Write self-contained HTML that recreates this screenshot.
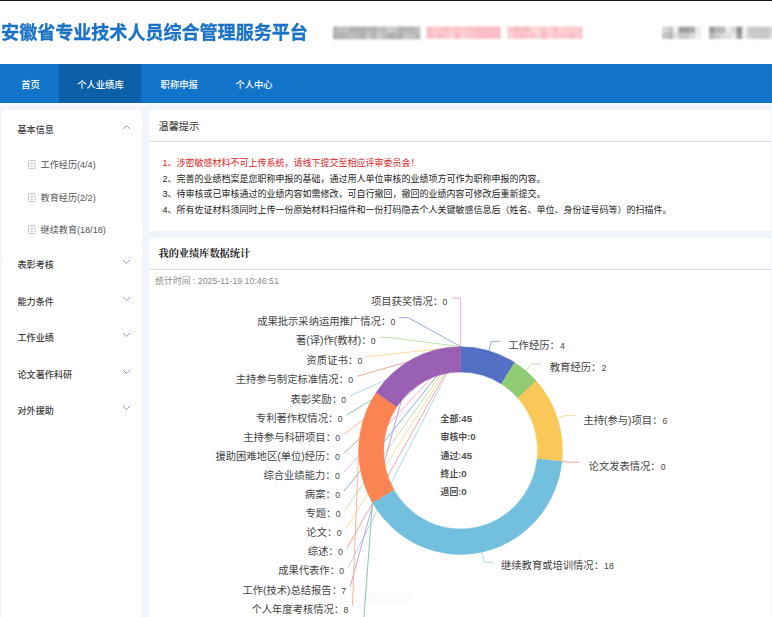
<!DOCTYPE html>
<html lang="zh-CN"><head><meta charset="utf-8"><title>安徽省专业技术人员综合管理服务平台</title>
<style>
html,body{margin:0;padding:0}
body{width:772px;height:617px;overflow:hidden;position:relative;background:#f1f4fa;font-family:"Liberation Sans","Noto Sans CJK SC",sans-serif;color:#333}
.abs,.mi,.si,.tip,.chev,.chart,.nav a{position:absolute}
#topline{left:0;top:0;width:772px;height:1.3px;background:#101010}
#head{left:0;top:0;width:772px;height:64px;background:#fff}
#title{left:1.1px;top:19px;font-size:18.1px;-webkit-text-stroke:0.3px #1b73c6;line-height:28px;font-weight:700;color:#1b73c6;white-space:nowrap;letter-spacing:-0.05px;transform:scaleY(1.03);transform-origin:0 6px}
#nav{left:0;top:64px;width:772px;height:39px;background:#1274c9}
#nav .act{position:absolute;left:58.5px;top:0;width:82.7px;height:39px;background:#0c5fa8}
.nav a{top:65.6px;height:39px;line-height:39px;font-size:9.3px;color:#fff;font-weight:500;white-space:nowrap;text-decoration:none}
#side{left:2px;top:110px;width:140px;height:520px;background:#fff;border-radius:3px}
.panel{left:149px;width:621.5px;background:#fff;border-radius:3px}
.ph{position:absolute;left:0;right:0;top:0;height:31px;border-bottom:1px solid #dcdcdc}
.mi{left:17.5px;font-size:9.1px;line-height:16px;color:#404040;font-weight:500;white-space:nowrap}
.si{left:40.6px;font-size:9.1px;line-height:16px;color:#555;white-space:nowrap}
.tip{left:162.5px;font-size:9.0px;line-height:16px;color:#222;white-space:nowrap}
.tip.red{color:#d9251c}
.h1{left:158.5px;font-size:10.2px;line-height:16px;color:#333;white-space:nowrap}
.chart{left:0;top:0}
.chart text{font-family:"Liberation Sans","Noto Sans CJK SC",sans-serif;fill:#444}
.chart .n{font-size:10.3px}
.chart .v{font-size:8.7px}
.chart .c{font-size:8.9px;font-weight:700;fill:#505050}
.chart .cd{font-size:9.7px}
</style></head><body>
<div class="abs" id="head"></div>
<div class="abs" id="topline"></div>
<div class="abs" id="title">安徽省专业技术人员综合管理服务平台</div>
<svg class="chart" style="filter:blur(0.9px)" width="772" height="64" viewBox="0 0 772 64"><rect x="333.0" y="26.5" width="5.7" height="6.5" fill="rgb(182, 182, 182)"/><rect x="333.0" y="32.8" width="5.7" height="6.5" fill="rgb(176, 176, 176)"/><rect x="338.4" y="26.5" width="5.7" height="6.5" fill="rgb(192, 192, 192)"/><rect x="338.4" y="32.8" width="5.7" height="6.5" fill="rgb(174, 174, 174)"/><rect x="343.9" y="26.5" width="5.7" height="6.5" fill="rgb(189, 189, 189)"/><rect x="343.9" y="32.8" width="5.7" height="6.5" fill="rgb(183, 183, 183)"/><rect x="349.3" y="26.5" width="5.7" height="6.5" fill="rgb(173, 173, 173)"/><rect x="349.3" y="32.8" width="5.7" height="6.5" fill="rgb(188, 188, 188)"/><rect x="354.8" y="26.5" width="5.7" height="6.5" fill="rgb(173, 173, 173)"/><rect x="354.8" y="32.8" width="5.7" height="6.5" fill="rgb(185, 185, 185)"/><rect x="360.2" y="26.5" width="5.7" height="6.5" fill="rgb(174, 174, 174)"/><rect x="360.2" y="32.8" width="5.7" height="6.5" fill="rgb(174, 174, 174)"/><rect x="365.6" y="26.5" width="5.7" height="6.5" fill="rgb(185, 185, 185)"/><rect x="365.6" y="32.8" width="5.7" height="6.5" fill="rgb(198, 198, 198)"/><rect x="371.1" y="26.5" width="5.7" height="6.5" fill="rgb(175, 175, 175)"/><rect x="371.1" y="32.8" width="5.7" height="6.5" fill="rgb(179, 179, 179)"/><rect x="376.5" y="26.5" width="5.7" height="6.5" fill="rgb(192, 192, 192)"/><rect x="376.5" y="32.8" width="5.7" height="6.5" fill="rgb(202, 202, 202)"/><rect x="381.9" y="26.5" width="5.7" height="6.5" fill="rgb(190, 190, 190)"/><rect x="381.9" y="32.8" width="5.7" height="6.5" fill="rgb(184, 184, 184)"/><rect x="387.4" y="26.5" width="5.7" height="6.5" fill="rgb(203, 203, 203)"/><rect x="387.4" y="32.8" width="5.7" height="6.5" fill="rgb(173, 173, 173)"/><rect x="392.8" y="26.5" width="5.7" height="6.5" fill="rgb(199, 199, 199)"/><rect x="392.8" y="32.8" width="5.7" height="6.5" fill="rgb(181, 181, 181)"/><rect x="398.2" y="26.5" width="5.7" height="6.5" fill="rgb(176, 176, 176)"/><rect x="398.2" y="32.8" width="5.7" height="6.5" fill="rgb(175, 175, 175)"/><rect x="403.7" y="26.5" width="5.7" height="6.5" fill="rgb(181, 181, 181)"/><rect x="403.7" y="32.8" width="5.7" height="6.5" fill="rgb(198, 198, 198)"/><rect x="409.1" y="26.5" width="5.7" height="6.5" fill="rgb(177, 177, 177)"/><rect x="409.1" y="32.8" width="5.7" height="6.5" fill="rgb(190, 190, 190)"/><rect x="414.6" y="26.5" width="5.7" height="6.5" fill="rgb(192, 192, 192)"/><rect x="414.6" y="32.8" width="5.7" height="6.5" fill="rgb(183, 183, 183)"/><rect x="426.5" y="26.5" width="6.0" height="6.3" fill="rgb(249, 188, 194)"/><rect x="426.5" y="32.5" width="6.0" height="6.3" fill="rgb(249, 188, 194)"/><rect x="432.2" y="26.5" width="6.0" height="6.3" fill="rgb(249, 188, 194)"/><rect x="432.2" y="32.5" width="6.0" height="6.3" fill="rgb(249, 188, 194)"/><rect x="437.9" y="26.5" width="6.0" height="6.3" fill="rgb(249, 188, 194)"/><rect x="437.9" y="32.5" width="6.0" height="6.3" fill="rgb(249, 188, 194)"/><rect x="443.6" y="26.5" width="6.0" height="6.3" fill="rgb(249, 188, 194)"/><rect x="443.6" y="32.5" width="6.0" height="6.3" fill="rgb(249, 188, 194)"/><rect x="449.3" y="26.5" width="6.0" height="6.3" fill="rgb(249, 188, 194)"/><rect x="449.3" y="32.5" width="6.0" height="6.3" fill="rgb(249, 188, 194)"/><rect x="455.0" y="26.5" width="6.0" height="6.3" fill="rgb(249, 188, 194)"/><rect x="455.0" y="32.5" width="6.0" height="6.3" fill="rgb(249, 188, 194)"/><rect x="460.7" y="26.5" width="6.0" height="6.3" fill="rgb(249, 188, 194)"/><rect x="460.7" y="32.5" width="6.0" height="6.3" fill="rgb(249, 188, 194)"/><rect x="466.3" y="26.5" width="6.0" height="6.3" fill="rgb(249, 188, 194)"/><rect x="466.3" y="32.5" width="6.0" height="6.3" fill="rgb(249, 188, 194)"/><rect x="472.0" y="26.5" width="6.0" height="6.3" fill="rgb(249, 188, 194)"/><rect x="472.0" y="32.5" width="6.0" height="6.3" fill="rgb(249, 188, 194)"/><rect x="477.7" y="26.5" width="6.0" height="6.3" fill="rgb(249, 188, 194)"/><rect x="477.7" y="32.5" width="6.0" height="6.3" fill="rgb(249, 188, 194)"/><rect x="483.4" y="26.5" width="6.0" height="6.3" fill="rgb(249, 188, 194)"/><rect x="483.4" y="32.5" width="6.0" height="6.3" fill="rgb(249, 188, 194)"/><rect x="489.1" y="26.5" width="6.0" height="6.3" fill="rgb(249, 188, 194)"/><rect x="489.1" y="32.5" width="6.0" height="6.3" fill="rgb(249, 188, 194)"/><rect x="494.8" y="26.5" width="6.0" height="6.3" fill="rgb(249, 188, 194)"/><rect x="494.8" y="32.5" width="6.0" height="6.3" fill="rgb(249, 188, 194)"/><rect x="507.5" y="26.5" width="6.0" height="6.3" fill="rgb(249, 188, 194)"/><rect x="507.5" y="32.5" width="6.0" height="6.3" fill="rgb(249, 188, 194)"/><rect x="513.2" y="26.5" width="6.0" height="6.3" fill="rgb(249, 188, 194)"/><rect x="513.2" y="32.5" width="6.0" height="6.3" fill="rgb(249, 188, 194)"/><rect x="519.0" y="26.5" width="6.0" height="6.3" fill="rgb(249, 188, 194)"/><rect x="519.0" y="32.5" width="6.0" height="6.3" fill="rgb(249, 188, 194)"/><rect x="524.7" y="26.5" width="6.0" height="6.3" fill="rgb(249, 188, 194)"/><rect x="524.7" y="32.5" width="6.0" height="6.3" fill="rgb(249, 188, 194)"/><rect x="530.4" y="26.5" width="6.0" height="6.3" fill="rgb(249, 188, 194)"/><rect x="530.4" y="32.5" width="6.0" height="6.3" fill="rgb(249, 188, 194)"/><rect x="536.2" y="26.5" width="6.0" height="6.3" fill="rgb(249, 188, 194)"/><rect x="536.2" y="32.5" width="6.0" height="6.3" fill="rgb(249, 188, 194)"/><rect x="541.9" y="26.5" width="6.0" height="6.3" fill="rgb(249, 188, 194)"/><rect x="541.9" y="32.5" width="6.0" height="6.3" fill="rgb(249, 188, 194)"/><rect x="547.6" y="26.5" width="6.0" height="6.3" fill="rgb(249, 188, 194)"/><rect x="547.6" y="32.5" width="6.0" height="6.3" fill="rgb(249, 188, 194)"/><rect x="553.3" y="26.5" width="6.0" height="6.3" fill="rgb(249, 188, 194)"/><rect x="553.3" y="32.5" width="6.0" height="6.3" fill="rgb(249, 188, 194)"/><rect x="559.1" y="26.5" width="6.0" height="6.3" fill="rgb(249, 188, 194)"/><rect x="559.1" y="32.5" width="6.0" height="6.3" fill="rgb(249, 188, 194)"/><rect x="564.8" y="26.5" width="6.0" height="6.3" fill="rgb(249, 188, 194)"/><rect x="564.8" y="32.5" width="6.0" height="6.3" fill="rgb(249, 188, 194)"/><rect x="570.5" y="26.5" width="6.0" height="6.3" fill="rgb(249, 188, 194)"/><rect x="570.5" y="32.5" width="6.0" height="6.3" fill="rgb(249, 188, 194)"/><rect x="576.3" y="26.5" width="6.0" height="6.3" fill="rgb(249, 188, 194)"/><rect x="576.3" y="32.5" width="6.0" height="6.3" fill="rgb(249, 188, 194)"/><rect x="662.0" y="26.7" width="5.8" height="6.3" fill="rgb(216,216,216)"/><rect x="667.5" y="26.7" width="5.8" height="6.3" fill="rgb(198,198,198)"/><rect x="673.0" y="26.7" width="5.8" height="6.3" fill="rgb(238,238,238)"/><rect x="678.5" y="26.7" width="5.8" height="6.3" fill="rgb(156,156,156)"/><rect x="684.0" y="26.7" width="5.8" height="6.3" fill="rgb(154,154,154)"/><rect x="689.5" y="26.7" width="5.8" height="6.3" fill="rgb(168,168,168)"/><rect x="695.0" y="26.7" width="5.8" height="6.3" fill="rgb(234,234,234)"/><rect x="662.0" y="32.7" width="5.8" height="6.3" fill="rgb(198,198,198)"/><rect x="667.5" y="32.7" width="5.8" height="6.3" fill="rgb(184,184,184)"/><rect x="673.0" y="32.7" width="5.8" height="6.3" fill="rgb(224,224,224)"/><rect x="678.5" y="32.7" width="5.8" height="6.3" fill="rgb(200,200,200)"/><rect x="684.0" y="32.7" width="5.8" height="6.3" fill="rgb(202,202,202)"/><rect x="689.5" y="32.7" width="5.8" height="6.3" fill="rgb(220,220,220)"/><rect x="695.0" y="32.7" width="5.8" height="6.3" fill="rgb(238,238,238)"/><rect x="709.0" y="26.7" width="5.8" height="6.3" fill="rgb(154,154,154)"/><rect x="714.5" y="26.7" width="5.8" height="6.3" fill="rgb(180,180,180)"/><rect x="720.0" y="26.7" width="5.8" height="6.3" fill="rgb(184,184,184)"/><rect x="725.5" y="26.7" width="5.8" height="6.3" fill="rgb(236,236,236)"/><rect x="731.0" y="26.7" width="5.8" height="6.3" fill="rgb(220,220,220)"/><rect x="736.5" y="26.7" width="5.8" height="6.3" fill="rgb(142,142,142)"/><rect x="742.0" y="26.7" width="5.8" height="6.3" fill="rgb(238,238,238)"/><rect x="747.5" y="26.7" width="5.8" height="6.3" fill="rgb(198,198,198)"/><rect x="753.0" y="26.7" width="5.8" height="6.3" fill="rgb(200,200,200)"/><rect x="758.5" y="26.7" width="5.8" height="6.3" fill="rgb(196,196,196)"/><rect x="764.0" y="26.7" width="5.8" height="6.3" fill="rgb(198,198,198)"/><rect x="769.5" y="26.7" width="5.8" height="6.3" fill="rgb(204,204,204)"/><rect x="709.0" y="32.7" width="5.8" height="6.3" fill="rgb(182,182,182)"/><rect x="714.5" y="32.7" width="5.8" height="6.3" fill="rgb(200,200,200)"/><rect x="720.0" y="32.7" width="5.8" height="6.3" fill="rgb(220,220,220)"/><rect x="725.5" y="32.7" width="5.8" height="6.3" fill="rgb(224,224,224)"/><rect x="731.0" y="32.7" width="5.8" height="6.3" fill="rgb(234,234,234)"/><rect x="736.5" y="32.7" width="5.8" height="6.3" fill="rgb(156,156,156)"/><rect x="742.0" y="32.7" width="5.8" height="6.3" fill="rgb(238,238,238)"/><rect x="747.5" y="32.7" width="5.8" height="6.3" fill="rgb(208,208,208)"/><rect x="753.0" y="32.7" width="5.8" height="6.3" fill="rgb(204,204,204)"/><rect x="758.5" y="32.7" width="5.8" height="6.3" fill="rgb(202,202,202)"/><rect x="764.0" y="32.7" width="5.8" height="6.3" fill="rgb(204,204,204)"/><rect x="769.5" y="32.7" width="5.8" height="6.3" fill="rgb(208,208,208)"/><rect x="426.5" y="26.5" width="5.8" height="6.2" fill="#fff" opacity="0"/><rect x="426.5" y="32.5" width="5.8" height="6.2" fill="#fff" opacity="0"/><rect x="432.1" y="26.5" width="5.8" height="6.2" fill="#fff" opacity="0.2"/><rect x="432.1" y="32.5" width="5.8" height="6.2" fill="#fff" opacity="0.2"/><rect x="437.7" y="26.5" width="5.8" height="6.2" fill="#fff" opacity="0.2"/><rect x="437.7" y="32.5" width="5.8" height="6.2" fill="#fff" opacity="0"/><rect x="443.3" y="26.5" width="5.8" height="6.2" fill="#fff" opacity="0"/><rect x="443.3" y="32.5" width="5.8" height="6.2" fill="#fff" opacity="0.2"/><rect x="448.9" y="26.5" width="5.8" height="6.2" fill="#fff" opacity="0.2"/><rect x="448.9" y="32.5" width="5.8" height="6.2" fill="#fff" opacity="0.35"/><rect x="454.5" y="26.5" width="5.8" height="6.2" fill="#fff" opacity="0.1"/><rect x="454.5" y="32.5" width="5.8" height="6.2" fill="#fff" opacity="0"/><rect x="460.1" y="26.5" width="5.8" height="6.2" fill="#fff" opacity="0.2"/><rect x="460.1" y="32.5" width="5.8" height="6.2" fill="#fff" opacity="0.35"/><rect x="465.7" y="26.5" width="5.8" height="6.2" fill="#fff" opacity="0.1"/><rect x="465.7" y="32.5" width="5.8" height="6.2" fill="#fff" opacity="0.2"/><rect x="471.3" y="26.5" width="5.8" height="6.2" fill="#fff" opacity="0.1"/><rect x="471.3" y="32.5" width="5.8" height="6.2" fill="#fff" opacity="0.2"/><rect x="476.9" y="26.5" width="5.8" height="6.2" fill="#fff" opacity="0"/><rect x="476.9" y="32.5" width="5.8" height="6.2" fill="#fff" opacity="0"/><rect x="482.5" y="26.5" width="5.8" height="6.2" fill="#fff" opacity="0"/><rect x="482.5" y="32.5" width="5.8" height="6.2" fill="#fff" opacity="0"/><rect x="488.1" y="26.5" width="5.8" height="6.2" fill="#fff" opacity="0"/><rect x="488.1" y="32.5" width="5.8" height="6.2" fill="#fff" opacity="0"/><rect x="493.7" y="26.5" width="5.8" height="6.2" fill="#fff" opacity="0"/><rect x="493.7" y="32.5" width="5.8" height="6.2" fill="#fff" opacity="0"/><rect x="507.5" y="26.5" width="5.8" height="6.2" fill="#fff" opacity="0.2"/><rect x="507.5" y="32.5" width="5.8" height="6.2" fill="#fff" opacity="0.35"/><rect x="513.1" y="26.5" width="5.8" height="6.2" fill="#fff" opacity="0"/><rect x="513.1" y="32.5" width="5.8" height="6.2" fill="#fff" opacity="0.1"/><rect x="518.7" y="26.5" width="5.8" height="6.2" fill="#fff" opacity="0.1"/><rect x="518.7" y="32.5" width="5.8" height="6.2" fill="#fff" opacity="0"/><rect x="524.3" y="26.5" width="5.8" height="6.2" fill="#fff" opacity="0"/><rect x="524.3" y="32.5" width="5.8" height="6.2" fill="#fff" opacity="0.2"/><rect x="529.9" y="26.5" width="5.8" height="6.2" fill="#fff" opacity="0.35"/><rect x="529.9" y="32.5" width="5.8" height="6.2" fill="#fff" opacity="0.1"/><rect x="535.5" y="26.5" width="5.8" height="6.2" fill="#fff" opacity="0.35"/><rect x="535.5" y="32.5" width="5.8" height="6.2" fill="#fff" opacity="0.35"/><rect x="541.1" y="26.5" width="5.8" height="6.2" fill="#fff" opacity="0.1"/><rect x="541.1" y="32.5" width="5.8" height="6.2" fill="#fff" opacity="0"/><rect x="546.7" y="26.5" width="5.8" height="6.2" fill="#fff" opacity="0.35"/><rect x="546.7" y="32.5" width="5.8" height="6.2" fill="#fff" opacity="0.35"/><rect x="552.3" y="26.5" width="5.8" height="6.2" fill="#fff" opacity="0"/><rect x="552.3" y="32.5" width="5.8" height="6.2" fill="#fff" opacity="0.2"/><rect x="557.9" y="26.5" width="5.8" height="6.2" fill="#fff" opacity="0.35"/><rect x="557.9" y="32.5" width="5.8" height="6.2" fill="#fff" opacity="0.2"/><rect x="563.5" y="26.5" width="5.8" height="6.2" fill="#fff" opacity="0.2"/><rect x="563.5" y="32.5" width="5.8" height="6.2" fill="#fff" opacity="0.2"/><rect x="569.1" y="26.5" width="5.8" height="6.2" fill="#fff" opacity="0.2"/><rect x="569.1" y="32.5" width="5.8" height="6.2" fill="#fff" opacity="0"/><rect x="574.7" y="26.5" width="5.8" height="6.2" fill="#fff" opacity="0.2"/><rect x="574.7" y="32.5" width="5.8" height="6.2" fill="#fff" opacity="0.2"/></svg>
<div class="abs" id="nav"><div class="act"></div></div>
<div class="nav">
<a style="left:21.3px">首页</a><a style="left:77.2px">个人业绩库</a><a style="left:160.6px">职称申报</a><a style="left:235.4px">个人中心</a>
</div>
<div class="abs" style="left:0;top:103px;width:772px;height:5px;background:linear-gradient(#fbfdff,#f1f4fa)"></div>
<div class="abs" id="side"></div>
<div class="mi" style="top:122.0px">基本信息</div><svg class="chev" style="left:122px;top:123.8px" width="9" height="6" viewBox="0 0 9 6"><path d="M1 5L4.5 1.5L8 5" fill="none" stroke="#9a9aa6" stroke-width="0.95"/></svg><div class="mi" style="top:257.3px">表彰考核</div><svg class="chev" style="left:121.5px;top:259.3px" width="9" height="6" viewBox="0 0 9 6"><path d="M1 1L4.5 4.5L8 1" fill="none" stroke="#9a9aa6" stroke-width="0.95"/></svg><div class="mi" style="top:293.7px">能力条件</div><svg class="chev" style="left:121.5px;top:295.7px" width="9" height="6" viewBox="0 0 9 6"><path d="M1 1L4.5 4.5L8 1" fill="none" stroke="#9a9aa6" stroke-width="0.95"/></svg><div class="mi" style="top:330.2px">工作业绩</div><svg class="chev" style="left:121.5px;top:332.2px" width="9" height="6" viewBox="0 0 9 6"><path d="M1 1L4.5 4.5L8 1" fill="none" stroke="#9a9aa6" stroke-width="0.95"/></svg><div class="mi" style="top:366.6px">论文著作科研</div><svg class="chev" style="left:121.5px;top:368.6px" width="9" height="6" viewBox="0 0 9 6"><path d="M1 1L4.5 4.5L8 1" fill="none" stroke="#9a9aa6" stroke-width="0.95"/></svg><div class="mi" style="top:403.2px">对外援助</div><svg class="chev" style="left:121.5px;top:405.2px" width="9" height="6" viewBox="0 0 9 6"><path d="M1 1L4.5 4.5L8 1" fill="none" stroke="#9a9aa6" stroke-width="0.95"/></svg><svg class="chev" style="left:28.2px;top:159.7px" width="7.6" height="9.2" viewBox="0 0 7.6 9.2"><rect x="0.5" y="0.5" width="6.6" height="8.2" rx="1.1" fill="none" stroke="#b4b4b4" stroke-width="0.8"/><circle cx="3.8" cy="3.6" r="1.05" fill="none" stroke="#b0b0b0" stroke-width="0.65"/><path d="M2.3 6.6h3" stroke="#b0b0b0" stroke-width="0.65"/></svg><div class="si" style="top:156.5px">工作经历(4/4)</div><svg class="chev" style="left:28.2px;top:192.9px" width="7.6" height="9.2" viewBox="0 0 7.6 9.2"><rect x="0.5" y="0.5" width="6.6" height="8.2" rx="1.1" fill="none" stroke="#b4b4b4" stroke-width="0.8"/><circle cx="3.8" cy="3.6" r="1.05" fill="none" stroke="#b0b0b0" stroke-width="0.65"/><path d="M2.3 6.6h3" stroke="#b0b0b0" stroke-width="0.65"/></svg><div class="si" style="top:189.7px">教育经历(2/2)</div><svg class="chev" style="left:28.2px;top:225.3px" width="7.6" height="9.2" viewBox="0 0 7.6 9.2"><rect x="0.5" y="0.5" width="6.6" height="8.2" rx="1.1" fill="none" stroke="#b4b4b4" stroke-width="0.8"/><circle cx="3.8" cy="3.6" r="1.05" fill="none" stroke="#b0b0b0" stroke-width="0.65"/><path d="M2.3 6.6h3" stroke="#b0b0b0" stroke-width="0.65"/></svg><div class="si" style="top:222.1px">继续教育(18/18)</div>
<div class="abs panel" style="top:110px;height:120.5px"><div class="ph"></div></div>
<div class="abs panel" style="top:237.5px;height:400px"><div class="ph"></div></div>
<div class="abs h1" style="top:118.7px">温馨提示</div>
<div class="abs h1" style="top:245.9px;font-family:'Liberation Serif','Noto Serif CJK SC',serif;font-weight:700;color:#222">我的业绩库数据统计</div>
<div class="tip red" style="top:155.3px">1、涉密敏感材料不可上传系统，请线下提交至相应评审委员会！</div><div class="tip" style="top:170.8px">2、完善的业绩档案是您职称申报的基础，通过用人单位审核的业绩项方可作为职称申报的内容。</div><div class="tip" style="top:186.2px">3、待审核或已审核通过的业绩内容如需修改，可自行撤回，撤回的业绩内容可修改后重新提交。</div><div class="tip" style="top:201.7px">4、所有佐证材料须同时上传一份原始材料扫描件和一份打码隐去个人关键敏感信息后（姓名、单位、身份证号码等）的扫描件。</div>
<div class="abs" style="left:155.3px;top:272.7px;font-size:8.8px;line-height:16px;color:#8a8a8a;white-space:nowrap">统计时间 : 2025-11-19 10:46:51</div>
<svg class="chart" width="772" height="617" viewBox="0 0 772 617">
<g fill="none" stroke-width="1" stroke-linejoin="round" opacity="0.6"><polyline points="460.6,346.6 460.6,298.1 451.3,298.1" stroke="#ea7ccc"/><polyline points="460.6,346.6 408.3,317.7 399.3,317.7" stroke="#5470c6"/><polyline points="460.6,346.6 386.7,337.2 379.7,337.2" stroke="#91cc75"/><polyline points="460.6,346.6 366.3,356.8 366.3,356.8" stroke="#fac858"/><polyline points="460.6,346.6 357.2,376.3 357.2,376.3" stroke="#ee6666"/><polyline points="460.6,346.6 350.2,395.9 350.2,395.9" stroke="#73c0de"/><polyline points="460.6,346.6 346.5,415.1 346.5,415.1" stroke="#3ba272"/><polyline points="460.6,346.6 344.2,434.1 344.2,434.1" stroke="#fc8452"/><polyline points="460.6,346.6 343.8,453.2 343.8,453.2" stroke="#9a60b4"/><polyline points="460.6,346.6 343.8,472.2 343.8,472.2" stroke="#ea7ccc"/><polyline points="460.6,346.6 344.0,491.2 344.0,491.2" stroke="#5470c6"/><polyline points="460.6,346.6 344.6,510.3 344.6,510.3" stroke="#91cc75"/><polyline points="460.6,346.6 345.5,529.3 345.5,529.3" stroke="#fac858"/><polyline points="460.6,346.6 346.9,548.4 346.9,548.4" stroke="#ee6666"/><polyline points="460.6,346.6 348.2,567.4 348.2,567.4" stroke="#73c0de"/><polyline points="412.8,358.8 350.2,586.5 350.2,586.5" stroke="#9a60b4"/><polyline points="358.8,446.9 352.4,605.5 352.4,605.5" stroke="#fc8452"/><polyline points="372.4,502.5 363.4,625" stroke="#3ba272"/><polyline points="488.7,350.7 491.4,341.3 500.5,341.3" stroke="#5470c6"/><polyline points="526.1,371.0 531.3,363.9 541,363.9" stroke="#91cc75"/><polyline points="557.5,418.4 564.8,415.6 575.4,415.6" stroke="#fac858"/><polyline points="561.9,461.4 569.5,462.2 579.6,462.2" stroke="#ee6666"/><polyline points="481.8,552.2 484.2,562.2 493,562.2" stroke="#73c0de"/></g>
<g><path d="M460.60 346.65A101.9 103.9 0 0 1 514.60 362.44L501.37 384.03A76.93 78.44 0 0 0 460.60 372.11Z" fill="#5470c6" stroke="#5470c6" stroke-width="0.45"/><path d="M514.60 362.44A101.9 103.9 0 0 1 536.33 381.03L517.77 398.06A76.93 78.44 0 0 0 501.37 384.03Z" fill="#91cc75" stroke="#91cc75" stroke-width="0.45"/><path d="M536.33 381.03A101.9 103.9 0 0 1 561.94 461.41L537.11 458.75A76.93 78.44 0 0 0 517.77 398.06Z" fill="#fac858" stroke="#fac858" stroke-width="0.45"/><path d="M561.94 461.41A101.9 103.9 0 0 1 372.35 502.50L393.97 489.77A76.93 78.44 0 0 0 537.11 458.75Z" fill="#73c0de" stroke="#73c0de" stroke-width="0.45"/><path d="M372.35 502.50A101.9 103.9 0 0 1 376.12 392.45L396.82 406.68A76.93 78.44 0 0 0 393.97 489.77Z" fill="#fc8452" stroke="#fc8452" stroke-width="0.45"/><path d="M376.12 392.45A101.9 103.9 0 0 1 460.60 346.65L460.60 372.11A76.93 78.44 0 0 0 396.82 406.68Z" fill="#9a60b4" stroke="#9a60b4" stroke-width="0.45"/></g>
<g class="lbl"><text x="447.3" y="305.1" text-anchor="end"><tspan class="n">项目获奖情况：</tspan><tspan class="v" dx="-0.6">0</tspan></text><text x="395.3" y="324.6" text-anchor="end"><tspan class="n">成果批示采纳运用推广情况：</tspan><tspan class="v" dx="-0.6">0</tspan></text><text x="375.7" y="344.2" text-anchor="end"><tspan class="n">著(译)作(教材)：</tspan><tspan class="v" dx="-0.6">0</tspan></text><text x="362.3" y="363.7" text-anchor="end"><tspan class="n">资质证书：</tspan><tspan class="v" dx="-0.6">0</tspan></text><text x="353.2" y="383.2" text-anchor="end"><tspan class="n">主持参与制定标准情况：</tspan><tspan class="v" dx="-0.6">0</tspan></text><text x="346.2" y="402.8" text-anchor="end"><tspan class="n">表彰奖励：</tspan><tspan class="v" dx="-0.6">0</tspan></text><text x="342.5" y="422.0" text-anchor="end"><tspan class="n">专利著作权情况：</tspan><tspan class="v" dx="-0.6">0</tspan></text><text x="340.2" y="441.1" text-anchor="end"><tspan class="n">主持参与科研项目：</tspan><tspan class="v" dx="-0.6">0</tspan></text><text x="339.8" y="460.1" text-anchor="end"><tspan class="n">援助困难地区(单位)经历：</tspan><tspan class="v" dx="-0.6">0</tspan></text><text x="339.8" y="479.1" text-anchor="end"><tspan class="n">综合业绩能力：</tspan><tspan class="v" dx="-0.6">0</tspan></text><text x="340" y="498.2" text-anchor="end"><tspan class="n">病案：</tspan><tspan class="v" dx="-0.6">0</tspan></text><text x="340.6" y="517.2" text-anchor="end"><tspan class="n">专题：</tspan><tspan class="v" dx="-0.6">0</tspan></text><text x="341.5" y="536.3" text-anchor="end"><tspan class="n">论文：</tspan><tspan class="v" dx="-0.6">0</tspan></text><text x="342.9" y="555.4" text-anchor="end"><tspan class="n">综述：</tspan><tspan class="v" dx="-0.6">0</tspan></text><text x="344.2" y="574.4" text-anchor="end"><tspan class="n">成果代表作：</tspan><tspan class="v" dx="-0.6">0</tspan></text><text x="346.2" y="593.5" text-anchor="end"><tspan class="n">工作(技术)总结报告：</tspan><tspan class="v" dx="-0.6">7</tspan></text><text x="348.4" y="612.5" text-anchor="end"><tspan class="n">个人年度考核情况：</tspan><tspan class="v" dx="-0.6">8</tspan></text><text x="508.3" y="349.1"><tspan class="n">工作经历：</tspan><tspan class="v" dx="0.1">4</tspan></text><text x="549.8" y="371.4"><tspan class="n">教育经历：</tspan><tspan class="v" dx="0.1">2</tspan></text><text x="583.5" y="423.6"><tspan class="n">主持(参与)项目：</tspan><tspan class="v" dx="0.1">6</tspan></text><text x="588.6" y="469.6"><tspan class="n">论文发表情况：</tspan><tspan class="v" dx="0.1">0</tspan></text><text x="501" y="569.4"><tspan class="n">继续教育或培训情况：</tspan><tspan class="v" dx="0.1">18</tspan></text></g>
<g><text class="c" x="440.6" y="422.1">全部:<tspan class="cd">45</tspan></text><text class="c" x="440.6" y="440.3">审核中:<tspan class="cd">0</tspan></text><text class="c" x="440.6" y="458.6">通过:<tspan class="cd">45</tspan></text><text class="c" x="440.6" y="476.9">终止:<tspan class="cd">0</tspan></text><text class="c" x="440.6" y="495.1">退回:<tspan class="cd">0</tspan></text></g>
<g><g style="filter:blur(1.6px)"><circle cx="368.7" cy="597.6" r="4.2" fill="#000" opacity="0.035"/><circle cx="377.5" cy="597.6" r="4.2" fill="#000" opacity="0.035"/><circle cx="387.3" cy="597.6" r="4.2" fill="#000" opacity="0.035"/><circle cx="396.8" cy="597.6" r="4.2" fill="#000" opacity="0.035"/><circle cx="406.5" cy="597.6" r="4.2" fill="#000" opacity="0.035"/></g><circle cx="368.7" cy="597.4" r="2.5" fill="#fff" opacity="0.8"/><circle cx="377.5" cy="597.4" r="2.5" fill="#fff" opacity="0.8"/><circle cx="387.3" cy="597.4" r="2.5" fill="#fff" opacity="0.95"/><circle cx="396.8" cy="597.4" r="2.5" fill="#fff" opacity="0.8"/><circle cx="406.5" cy="597.4" r="2.5" fill="#fff" opacity="0.8"/></g>
</svg>
</body></html>
